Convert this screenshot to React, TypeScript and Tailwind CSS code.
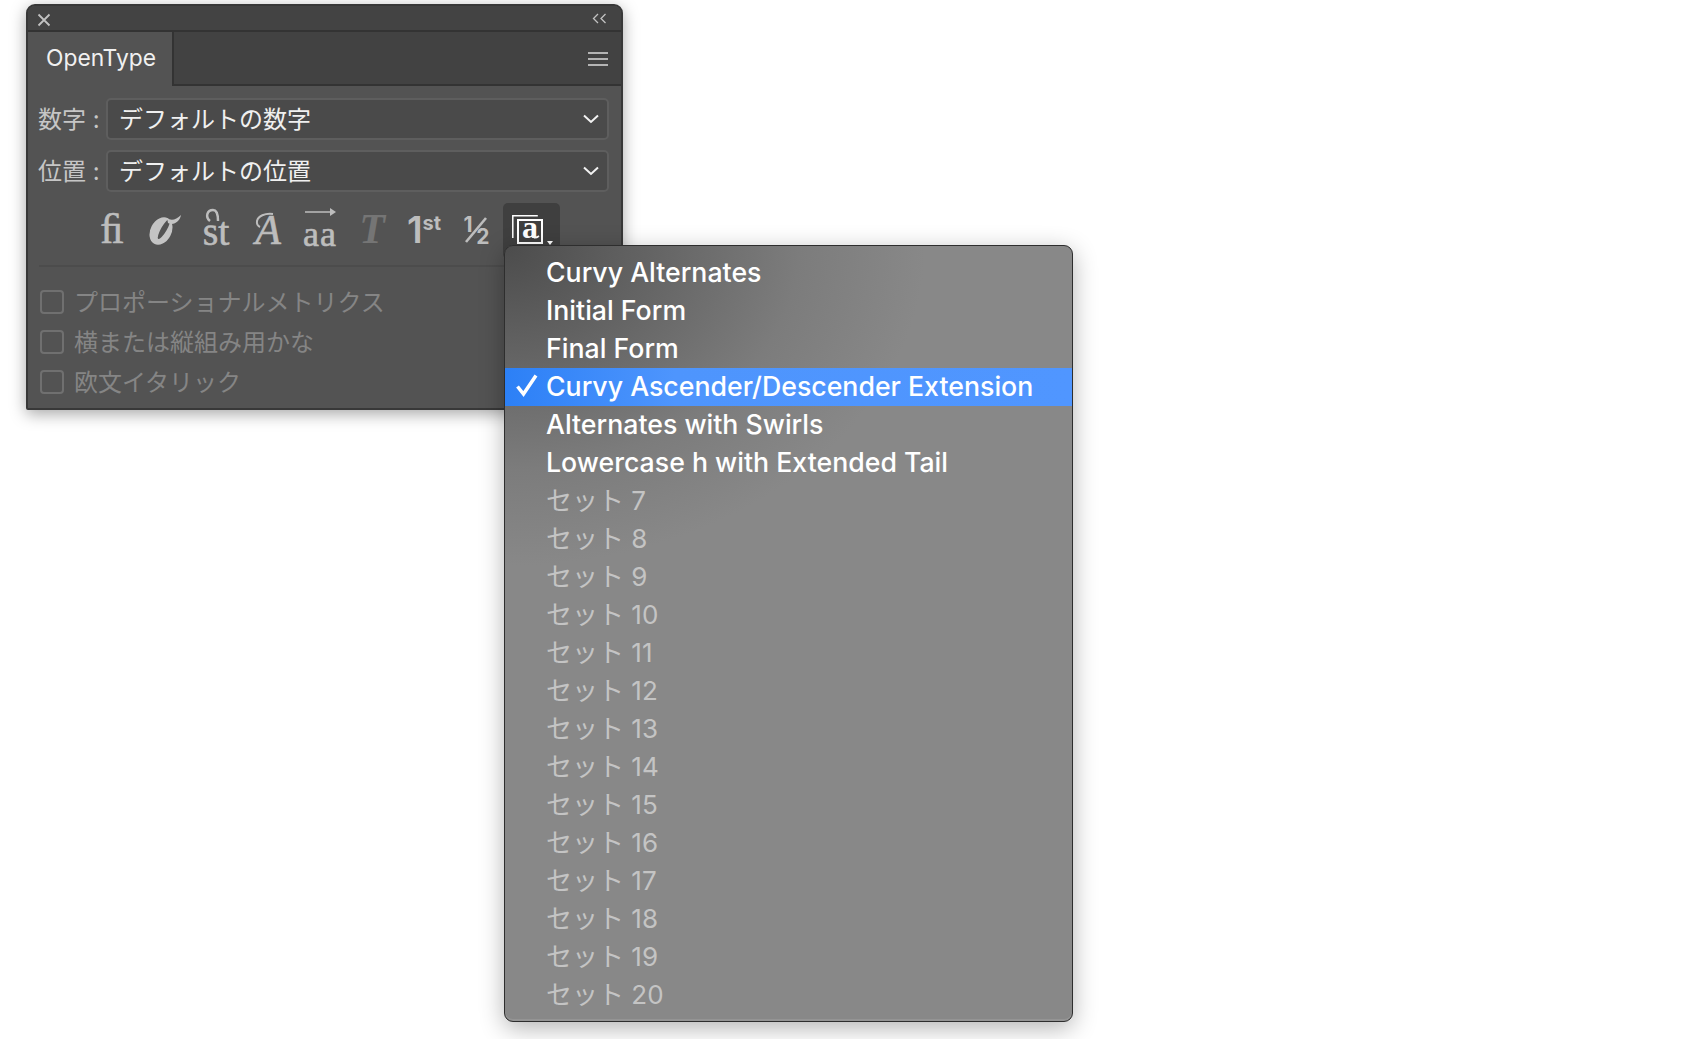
import React from "react";

const cjk = { fontFamily: "Inter, 'Noto Sans CJK JP', sans-serif" };
const serif = { fontFamily: "'Liberation Serif', serif" };

function Chevron() {
  return (
    <svg width="16" height="10" viewBox="0 0 16 10" fill="none" className="shrink-0">
      <path d="M1 1.500 8 8 15 1.500" stroke="#f2f2f2" strokeWidth="2" />
    </svg>
  );
}

function SelectRow({ label, value }: { label: string; value: string }) {
  return (
    <div className="flex items-center h-[42px]">
      <div className="w-[78px] pl-[10px] pt-[2px] text-[24px] leading-none text-[#c6c6c6] whitespace-nowrap">{label}</div>
      <div className="w-[503px] h-[42px] flex items-center justify-between pl-[11px] pr-[8px] rounded-[5px] border-2 border-[#5e5e5e] bg-[#4a4a4a] text-[24px] text-[#f0f0f0]">
        <span className="pt-[2px]">{value}</span>
        <Chevron />
      </div>
    </div>
  );
}

function Check({ label }: { label: string }) {
  return (
    <div className="flex items-center h-[40px] pl-[12px] gap-[10px]">
      <span className="block w-[24px] h-[24px] rounded-[4px] border-2 border-[#707070]" />
      <span className="pt-[1px] text-[24px] text-[#858585] whitespace-nowrap">{label}</span>
    </div>
  );
}

function Glyphs() {
  const heavy = "[-webkit-text-stroke:0.6px_#bdbdbd]";
  return (
    <div className="flex items-center h-[56px] pl-[58px] mt-[11px] text-[#bdbdbd]">
      <span className={`w-[52px] flex justify-center text-[42px] leading-none mt-[-4px] ${heavy}`} style={serif}>ﬁ</span>
      <span className="w-[52px] flex justify-center mt-[-2px]">
        <svg width="35" height="30" viewBox="0 0 35 30">
          <ellipse cx="14" cy="16" rx="10.500" ry="14.500" transform="rotate(28 14 16)" fill="#c4c4c4" />
          <ellipse cx="17" cy="14" rx="2.800" ry="11.500" transform="rotate(30 17 14)" fill="#535353" />
          <path d="M20 3C24 6 29 5 34 0 33 6 27 11 21 8Z" fill="#c4c4c4" />
        </svg>
      </span>
      <span className={`w-[52px] flex justify-center relative text-[40px] leading-none mt-[1px] ${heavy}`} style={serif}>
        st
        <svg width="26" height="14" viewBox="0 0 26 14" className="absolute top-[-4px] left-[13px]" fill="none">
          <path d="M7 13C2 9 4 2 10 2c4 0 5 4 5 11" stroke="#bdbdbd" strokeWidth="2.500" />
        </svg>
      </span>
      <span className={`w-[52px] flex justify-center relative text-[42px] leading-none italic mt-[-3px] ${heavy}`} style={serif}>
        A
        <svg width="24" height="24" viewBox="0 0 24 24" className="absolute top-[3px] left-[9px]" fill="none">
          <path d="M22 2C14 1 7 4 6 9c-.5 3 1 5 3 6" stroke="#bdbdbd" strokeWidth="2" />
        </svg>
      </span>
      <span className={`w-[52px] flex flex-col items-center relative text-[36px] leading-none ${heavy}`} style={serif}>
        <svg width="31" height="8" viewBox="0 0 31 8" className="absolute top-[-2px]">
          <path d="M0 3.200h26v1.600H0z M25 0l6 4-6 4z" fill="#bdbdbd" />
        </svg>
        <span className="mt-[6px] tracking-[1px]">aa</span>
      </span>
      <span className="w-[52px] flex justify-center text-[42px] leading-none italic font-bold text-[#757575] mt-[-4px]" style={serif}>T</span>
      <span className="w-[52px] flex justify-center text-[37px] leading-none font-semibold mt-[-3px]">
        1<span className="text-[20px] leading-[24px] font-bold">st</span>
      </span>
      <span className="w-[52px] flex justify-center mt-[-2px]">
        <span className="relative block w-[27px] h-[30px] font-bold text-[21px] leading-none">
          <span className="absolute left-[1px] top-[-1px]">1</span>
          <svg width="27" height="30" viewBox="0 0 27 30" className="absolute left-0 top-0" fill="none">
            <path d="M3 27 23 3" stroke="#bdbdbd" strokeWidth="2.600" />
          </svg>
          <span className="absolute right-0 bottom-[-2px]">2</span>
        </span>
      </span>
      <span className="w-[57px] h-[56px] ml-[1px] bg-[#3f3f3f] rounded-[5px] relative block">
        <svg width="31" height="29" viewBox="0 0 31 29" fill="none" className="absolute left-[9px] top-[12px]">
          <path d="M.8 23V.8h25" stroke="#fff" strokeWidth="1.500" />
          <rect x="6" y="5" width="24" height="23" stroke="#fff" strokeWidth="2" fill="#3f3f3f" />
          <path d="M20 20c1 3 3 4 7 1" stroke="#fff" strokeWidth="1.600" />
        </svg>
        <span className="absolute left-[19px] top-[7px] text-[32px] leading-[34px] text-white font-bold" style={serif}>a</span>
        <span className="absolute left-[44px] top-[38px] w-0 h-0 border-l-[3px] border-r-[3px] border-t-[4px] border-l-transparent border-r-transparent border-t-white" />
      </span>
    </div>
  );
}

const items = [
  "Curvy Alternates",
  "Initial Form",
  "Final Form",
  "Curvy Ascender/Descender Extension",
  "Alternates with Swirls",
  "Lowercase h with Extended Tail",
];

const sets = Array.from({ length: 14 }, (_, i) => `セット ${i + 7}`);

export default function App() {
  return (
    <div className="relative min-h-screen bg-white pl-[26px] pt-[4px] overflow-hidden" style={cjk}>
      <div className="w-[597px] h-[406px] rounded-t-[9px] rounded-b-[2px] border-2 border-[#383838] bg-[#535353] shadow-[0_4px_16px_rgba(0,0,0,0.35)] overflow-hidden">
        <div className="h-[26px] flex items-center justify-between pl-[9px] pr-[14px] bg-[#434343] border-b-2 border-[#333333]">
          <svg width="14" height="14" viewBox="0 0 14 14" fill="none" className="mt-[3px]">
            <path d="M1.500 1.500 12.500 12.500M12.500 1.500 1.500 12.500" stroke="#c2c2c2" strokeWidth="1.800" />
          </svg>
          <svg width="15" height="11" viewBox="0 0 15 11" fill="none">
            <path d="M6 1 1.500 5.500 6 10M13.500 1 9 5.500 13.500 10" stroke="#c2c2c2" strokeWidth="1.300" />
          </svg>
        </div>
        <div className="h-[54px] flex bg-[#424242] border-b-2 border-[#333333]">
          <div className="w-[146px] h-[54px] bg-[#535353] border-r-2 border-[#333333] pl-[18px] pb-[2px] flex items-center text-[22.8px] text-[#f0f0f0]">
            OpenType
          </div>
          <div className="ml-auto pr-[13px] pt-[1px] flex flex-col justify-center gap-[4px]">
            <span className="block w-[20px] h-[2px] bg-[#b4b4b4]" />
            <span className="block w-[20px] h-[2px] bg-[#b4b4b4]" />
            <span className="block w-[20px] h-[2px] bg-[#b4b4b4]" />
          </div>
        </div>
        <div className="pt-[12px] flex flex-col gap-[10px]">
          <SelectRow label="数字 :" value="デフォルトの数字" />
          <SelectRow label="位置 :" value="デフォルトの位置" />
        </div>
        <Glyphs />
        <div className="h-[2px] mx-[11px] mt-[6px] bg-[#4c4c4c]" />
        <div className="pt-[15px]">
          <Check label="プロポーショナルメトリクス" />
          <Check label="横または縦組み用かな" />
          <Check label="欧文イタリック" />
        </div>
      </div>

      <div className="absolute left-[504px] top-[245px] w-[569px] h-[777px] py-[8px] rounded-[9px] border border-[#2e2e2e] bg-[#888888] bg-[radial-gradient(ellipse_420px_320px_at_0%_0%,#4c4c4c_0%,#646464_35%,#7c7c7c_70%,#888888_100%)] shadow-[0_6px_24px_rgba(0,0,0,0.3),inset_0_-2px_0_rgba(255,255,255,0.1)] overflow-hidden">
        {items.map((t, i) => (
          <div
            key={t}
            className={
              i === 3
                ? "relative h-[38px] pl-[41px] pb-[2px] flex items-center text-[26.7px] font-medium text-white whitespace-nowrap bg-[linear-gradient(90deg,#2c80f6_0%,#4e95fd_30%,#5096ff_100%)]"
                : "h-[38px] pl-[41px] pb-[2px] flex items-center text-[26.7px] font-medium text-white whitespace-nowrap"
            }
          >
            {i === 3 && (
              <svg width="24" height="24" viewBox="0 0 24 24" fill="none" className="absolute left-[10px] top-[5px]">
                <path d="M2.500 13.500 8.500 21 21 2.500" stroke="#fff" strokeWidth="3.500" />
              </svg>
            )}
            {t}
          </div>
        ))}
        {sets.map((t) => (
          <div key={t} className="h-[38px] pl-[41px] pb-[2px] flex items-center text-[26px] text-[#c4c4c4] whitespace-nowrap">
            {t}
          </div>
        ))}
      </div>
    </div>
  );
}
